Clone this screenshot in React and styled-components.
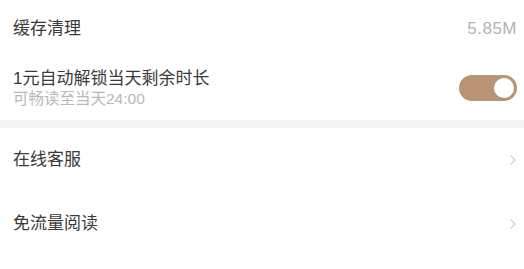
import styled, { createGlobalStyle } from "styled-components";
import { useState } from "react";

const Global = createGlobalStyle`
  html, body {
    margin: 0;
    padding: 0;
    background: #fff;
  }
  body {
    font-family: "Liberation Sans", "Noto Sans CJK SC", sans-serif;
    -webkit-font-smoothing: antialiased;
  }
`;

const Page = styled.div`
  width: 524px;
  padding-top: 2px;
  display: flex;
  flex-direction: column;
`;

const Row = styled.div`
  height: ${(props) => props.h}px;
  padding: 0 7px 0 13px;
  display: flex;
  align-items: center;
  justify-content: space-between;
  box-sizing: border-box;
`;

const TextCol = styled.div`
  display: flex;
  flex-direction: column;
`;

const Label = styled.span`
  font-size: 17px;
  line-height: 20px;
  color: #3a3a3a;
  font-weight: 400;
`;

const Sub = styled.span`
  font-size: 15.5px;
  line-height: 17px;
  color: #b8b8b8;
  margin-top: 1px;
`;

const Value = styled.span`
  font-size: 17px;
  color: #b3b3b3;
  letter-spacing: 0.5px;
`;

const Band = styled.div`
  height: 8px;
  background: #f5f5f5;
`;

const Track = styled.button`
  width: 58px;
  height: 26px;
  border: none;
  padding: 0 3px;
  border-radius: 13px;
  background: ${(props) => (props.on ? "#b99575" : "#ddd")};
  display: flex;
  align-items: center;
  justify-content: ${(props) => (props.on ? "flex-end" : "flex-start")};
  box-sizing: border-box;
  cursor: pointer;
`;

const Knob = styled.span`
  width: 20px;
  height: 20px;
  border-radius: 50%;
  background: #fff;
`;

const Chevron = () => (
  <svg width="8" height="12" viewBox="0 0 8 12">
    <path d="M1.5 1.5 L6 6 L1.5 10.5" fill="none" stroke="#cfcfcf" strokeWidth="1.4" />
  </svg>
);

export default function App() {
  const [on, setOn] = useState(true);

  return (
    <Page>
      <Global />
      <Row h={53}>
        <Label>缓存清理</Label>
        <Value>5.85M</Value>
      </Row>
      <Row h={65}>
        <TextCol>
          <Label>1元自动解锁当天剩余时长</Label>
          <Sub>可畅读至当天24:00</Sub>
        </TextCol>
        <Track on={on} onClick={() => setOn(!on)}>
          <Knob />
        </Track>
      </Row>
      <Band />
      <Row h={64}>
        <Label>在线客服</Label>
        <Chevron />
      </Row>
      <Row h={64}>
        <Label>免流量阅读</Label>
        <Chevron />
      </Row>
    </Page>
  );
}
